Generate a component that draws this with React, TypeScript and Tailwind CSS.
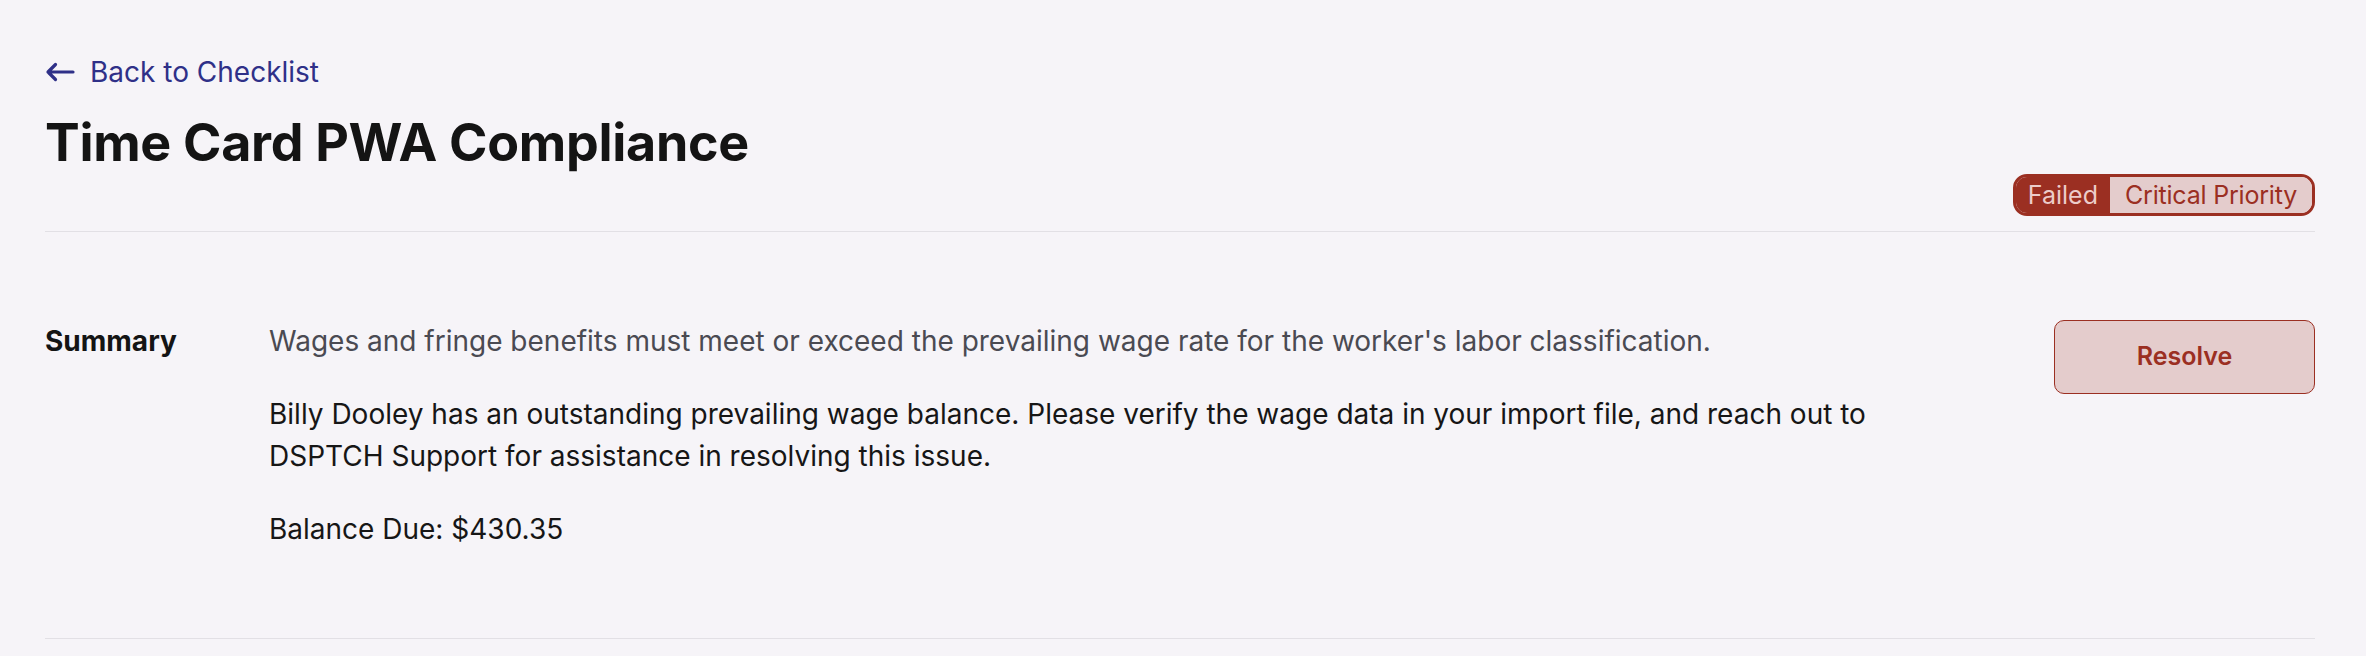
import React from "react";

export default function App() {
  return (
    <div className="min-h-screen bg-[#f6f4f8] pl-[45px] pr-[51px] font-['Inter','Noto_Sans',sans-serif] text-[#161616]">
      <div className="border-b border-[#e2e0e5] pb-[15px] pt-[54px]">
        <a href="#" className="flex h-[36px] items-center text-[28px] leading-[36px] text-[#2f3088]">
          <svg width="30" height="20" viewBox="0 0 30 20" fill="none" className="mr-[15px]">
            <path d="M28 10H3M10.5 2.5L3 10l7.5 7.5" stroke="#2f3088" strokeWidth="3.2" strokeLinecap="round" strokeLinejoin="round" />
          </svg>
          <span>Back to Checklist</span>
        </a>
        <h1 className="mt-[22px] text-[52px] font-bold leading-[62px] tracking-[-0.3px] text-[#141414]">
          Time Card PWA Compliance
        </h1>
        <div className="flex justify-end">
          <div className="flex h-[42px] overflow-hidden rounded-[14px] border-[3px] border-[#9b2f22] text-[25px] leading-[36px]">
            <span className="bg-[#9b2f22] pl-[12px] pr-[12px] text-[#ecccca]">Failed</span>
            <span className="bg-[#e4cccc] pl-[15px] pr-[15px] tracking-[-0.2px] text-[#9b2f22]">Critical Priority</span>
          </div>
        </div>
      </div>
      <div className="flex items-start border-b border-[#e2e0e5] pb-[88px] pt-[88px]">
        <div className="w-[224px] shrink-0 text-[28px] font-bold leading-[42px] text-[#141414]">Summary</div>
        <div className="flex w-[1650px] flex-col gap-[31px] text-[28px] leading-[42px]">
          <p className="text-[#4a4a52]">
            Wages and fringe benefits must meet or exceed the prevailing wage rate for the worker's labor classification.
          </p>
          <p className="text-[#161616]">
            Billy Dooley has an outstanding prevailing wage balance. Please verify the wage data in your import file, and reach out to DSPTCH Support for assistance in resolving this issue.
          </p>
          <p className="text-[#161616]">Balance Due: $430.35</p>
        </div>
        <button className="ml-auto h-[74px] w-[261px] shrink-0 rounded-[10px] border-[1.5px] border-[#9b2f22] bg-[#e4cccc] text-[25px] font-semibold text-[#9b2f22]">
          Resolve
        </button>
      </div>
    </div>
  );
}
